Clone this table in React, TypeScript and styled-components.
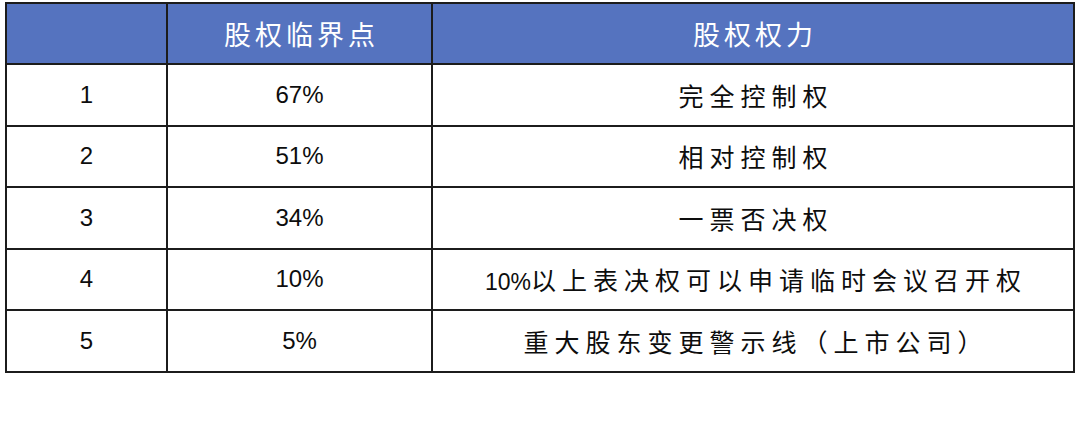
import * as React from "react";
import styled, { createGlobalStyle } from "styled-components";

const GlobalStyle = createGlobalStyle`
  html, body {
    margin: 0;
    padding: 0;
    background: #ffffff;
  }
  body {
    font-family: "Liberation Sans", "Noto Sans CJK SC", sans-serif;
  }
`;

const Page = styled.div`
  width: 1080px;
  height: 438px;
  padding: 2px 0 0 5px;
  box-sizing: border-box;
  background: #fff;
`;

const Table = styled.table`
  border-collapse: collapse;
  table-layout: fixed;
  width: 1068px;
  border: 2px solid #1c1c1c;
`;

const HeadCell = styled.th<{ $w: number }>`
  width: ${(p) => p.$w}px;
  height: 59px;
  padding: 0;
  background: #5573bf;
  color: #fff;
  border: 2px solid #1c1c1c;
  font-family: "Noto Sans CJK SC", sans-serif;
  font-weight: 400;
  font-size: 27px;
  letter-spacing: 4px;
  text-indent: 4px;
  text-align: center;
  vertical-align: middle;
`;

const Cell = styled.td<{ $cjk?: boolean }>`
  height: 59.5px;
  padding: 0;
  border: 2px solid #1c1c1c;
  color: #0d0d0d;
  text-align: center;
  vertical-align: middle;
  font-family: ${(p) =>
    p.$cjk
      ? `"Liberation Sans", "Noto Sans CJK SC", sans-serif`
      : `"Liberation Sans", sans-serif`};
  font-size: ${(p) => (p.$cjk ? "25px" : "24px")};
  letter-spacing: ${(p) => (p.$cjk ? "6px" : "0")};
  text-indent: ${(p) => (p.$cjk ? "6px" : "0")};
`;

const Num = styled.span`
  letter-spacing: 0;
  font-size: 23px;
`;

const rows = [
  { n: "1", pct: "67%", right: "完全控制权" },
  { n: "2", pct: "51%", right: "相对控制权" },
  { n: "3", pct: "34%", right: "一票否决权" },
  { n: "4", pct: "10%", right: "以上表决权可以申请临时会议召开权", prefix: "10%" },
  { n: "5", pct: "5%", right: "重大股东变更警示线（上市公司）" },
];

export default function App() {
  return (
    <Page>
      <GlobalStyle />
      <Table>
        <thead>
          <tr>
            <HeadCell $w={159}></HeadCell>
            <HeadCell $w={263}>股权临界点</HeadCell>
            <HeadCell $w={640}>股权权力</HeadCell>
          </tr>
        </thead>
        <tbody>
          {rows.map((r) => (
            <tr key={r.n}>
              <Cell>{r.n}</Cell>
              <Cell>{r.pct}</Cell>
              <Cell $cjk>
                {r.prefix && <Num>{r.prefix}</Num>}
                {r.right}
              </Cell>
            </tr>
          ))}
        </tbody>
      </Table>
    </Page>
  );
}
